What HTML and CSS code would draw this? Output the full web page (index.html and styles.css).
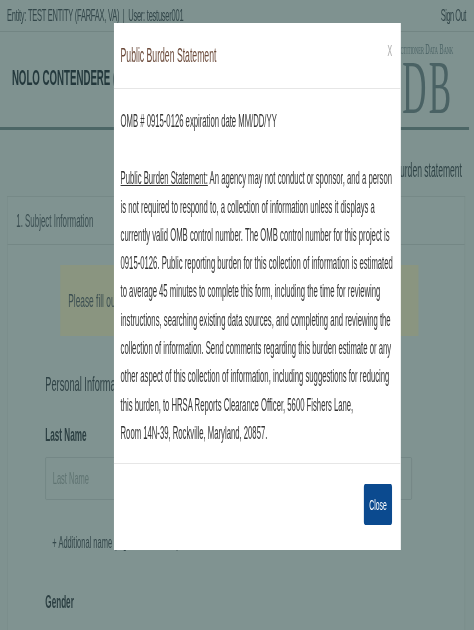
FILE: index.html
```html
<!DOCTYPE html>
<html lang="en">
<head>
<meta charset="utf-8">
<title>Public Burden Statement</title>
<link rel="stylesheet" href="styles.css">
</head>
<body>
<div class="stage">
  <header class="topbar">
    <div class="entity">Entity: TEST ENTITY (FARFAX, VA) &nbsp;|&nbsp; User: testuser001</div>
    <div class="signout">Sign Out</div>
  </header>
  <div class="brand">
    <h1 class="title">NOLO CONTENDERE (</h1>
    <div class="logo">
      <div class="logo-sub">Practitioner Data Bank</div>
      <div class="logo-mark">PDB</div>
    </div>
  </div>
  <div class="burden-row">Public burden statement</div>
  <main class="panel">
    <div class="panel-head">1. Subject Information</div>
    <div class="alert">Please fill out the form below</div>
    <h2 class="section">Personal Information</h2>
    <label class="field-label">Last Name</label>
    <div class="input">Last Name</div>
    <div class="add-name">+ Additional name (e.g. maiden name)</div>
    <label class="field-label gender">Gender</label>
  </main>

  <section class="modal">
    <div class="modal-head">
      <span class="modal-title">Public Burden Statement</span>
      <span class="modal-x">x</span>
    </div>
    <div class="modal-body">
      <p class="omb">OMB # 0915-0126 expiration date MM/DD/YY</p>
      <p class="statement"><u>Public Burden Statement:</u> An agency may not conduct or sponsor, and a person<br>is not required to respond to, a collection of information unless it displays a<br>currently valid OMB control number. The OMB control number for this project is<br>0915-0126. Public reporting burden for this collection of information is estimated<br>to average 45 minutes to complete this form, including the time for reviewing<br>instructions, searching existing data sources, and completing and reviewing the<br>collection of information. Send comments regarding this burden estimate or any<br>other aspect of this collection of information, including suggestions for reducing<br>this burden, to HRSA Reports Clearance Officer, 5600 Fishers Lane,<br>Room 14N-39, Rockville, Maryland, 20857.</p>
    </div>
    <div class="modal-foot">
      <button class="close-btn">Close</button>
    </div>
  </section>
</div>
</body>
</html>
```
FILE: styles.css
```css
html, body {
  margin: 0;
  padding: 0;
  width: 474px;
  height: 630px;
  overflow: hidden;
  background: #7c8f8d;
}
.stage {
  position: relative;
  width: 1077px;
  height: 630px;
  overflow: hidden;
  transform: scaleX(0.44);
  transform-origin: 0 0;
  filter: blur(0.35px);
  background: #7f9290;
  color: #2b3b3d;
  font-family: "Liberation Sans", Arial, sans-serif;
  font-size: 17.5px;
}
.topbar {
  display: flex;
  justify-content: space-between;
  align-items: center;
  height: 31px;
  padding: 0 18px 0 16px;
  border-bottom: 1px solid #728583;
  color: #33474a;
  font-size: 17px;
}
.entity { letter-spacing: -0.53px; }
.signout { letter-spacing: -1.1px; }
.brand {
  display: flex;
  justify-content: space-between;
  height: 95px;
  margin-right: 11px;
  padding: 0 36px 0 27px;
  border-bottom: 3px solid #4c6666;
}
.title {
  margin: 34px 0 0;
  font-size: 22px;
  line-height: 24px;
  font-weight: 700;
  color: #23383c;
}
.logo { text-align: right; color: #4a6264; font-family: "Liberation Serif", serif; }
.logo-sub { margin-top: 11px; font-size: 14px; font-variant: small-caps; line-height: 14px; white-space: nowrap; }
.logo-mark { margin-top: -2px; font-size: 76px; line-height: 64px; letter-spacing: 5px; }
.burden-row {
  height: 66px;
  line-height: 80px;
  padding-right: 27px;
  text-align: right;
  font-size: 19.5px;
  color: #2f4346;
}
.panel {
  margin: 0 20px 0 16px;
  height: 440px;
  border-top: 1px solid #768987;
  border-left: 1px solid #768987;
  border-right: 1px solid #768987;
  background: #809391;
}
.panel-head {
  height: 47px;
  line-height: 48px;
  padding-left: 20px;
  border-bottom: 1px solid #748785;
  color: #3b4f52;
  font-size: 18px;
}
.alert {
  height: 71px;
  line-height: 72px;
  margin: 20px 105px 0 120px;
  padding-left: 18px;
  background: #8a9580;
  color: #3d5052;
  font-size: 19px;
}
.section {
  margin: 36px 0 0 86px;
  font-size: 21px;
  line-height: 24px;
  font-weight: 400;
  color: #2f4346;
}
.field-label {
  display: block;
  margin: 27px 0 0 86px;
  font-size: 18.5px;
  line-height: 24px;
  font-weight: 700;
  color: #2b3f42;
}
.input {
  height: 41px;
  line-height: 41px;
  margin: 10px 120px 0 86px;
  padding-left: 16px;
  border: 1px solid #6f8381;
  border-radius: 2px;
  color: #5f7472;
  font-size: 17px;
}
.add-name {
  margin: 31px 0 0 102px;
  line-height: 24px;
  font-size: 17px;
  color: #33474a;
}
.gender { margin-top: 35px; }

.modal {
  position: absolute;
  left: 259px;
  top: 23px;
  width: 652px;
  height: 527px;
  display: flex;
  flex-direction: column;
  background: #fff;
  color: #333;
}
.modal-head {
  display: flex;
  justify-content: space-between;
  align-items: center;
  height: 65px;
  padding: 0 20px 0 15px;
  border-bottom: 1px solid #e6e6e6;
}
.modal-title { font-size: 19.7px; color: #6b4a3a; }
.modal-x { font-size: 21px; color: #b4b4b4; margin-top: -14px; }
.modal-body {
  flex: 1;
  padding: 0 15px;
  border-bottom: 1px solid #e6e6e6;
  white-space: nowrap;
}
.modal-body p { margin: 0; line-height: 28.3px; }
.omb { padding-top: 18px; }
.statement { padding-top: 29px; }
.modal-foot {
  display: flex;
  justify-content: flex-end;
  height: 66px;
  padding: 20px 20px 0 0;
}
.close-btn {
  width: 64px;
  height: 41px;
  padding: 0;
  border: 0;
  border-radius: 3px;
  background: #0b4a8f;
  color: #fff;
  font: 15.5px "Liberation Sans", Arial, sans-serif;
}
```
